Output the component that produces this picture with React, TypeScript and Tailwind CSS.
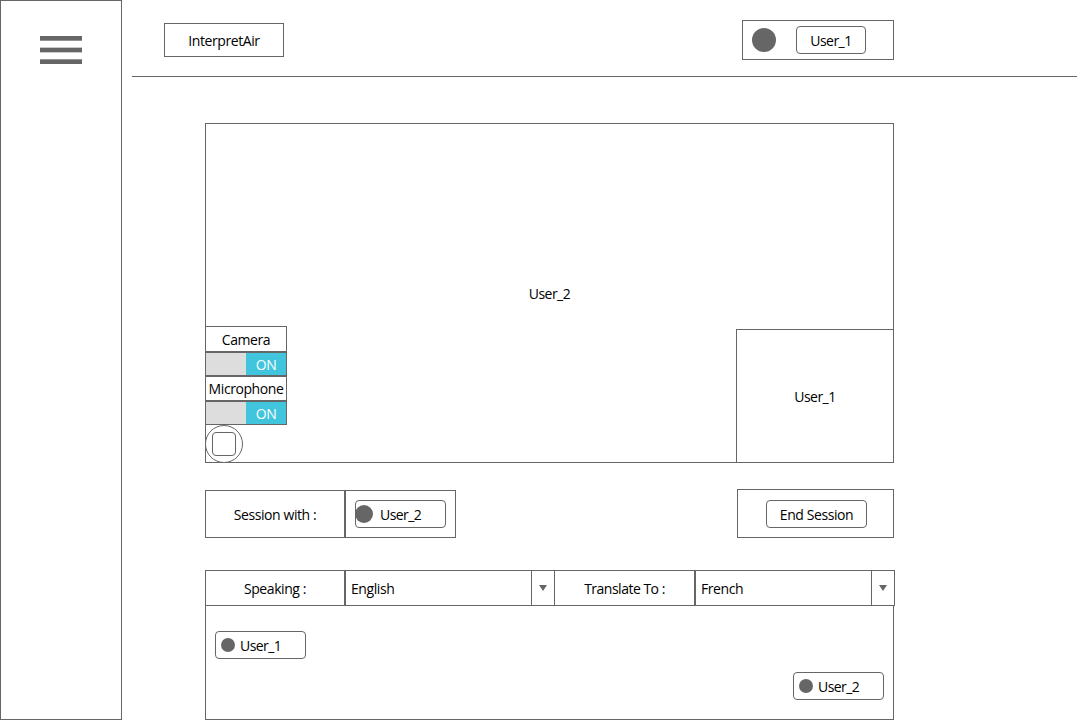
import type { ReactNode } from "react";

function Box({ className = "", children }: { className?: string; children?: ReactNode }) {
  return (
    <div className={`flex shrink-0 items-center border border-[#666666] bg-white ${className}`}>
      {children}
    </div>
  );
}

function Label({ className = "", children }: { className?: string; children: ReactNode }) {
  return <span className={`whitespace-nowrap ${className}`}>{children}</span>;
}

function MenuIcon() {
  return (
    <svg width="42" height="28" viewBox="0 0 42 28" fill="#666666">
      <rect width="42" height="4.7" />
      <rect y="11.65" width="42" height="4.7" />
      <rect y="23.3" width="42" height="4.7" />
    </svg>
  );
}

function Toggle() {
  return (
    <div className="flex h-6 w-[82px] border border-[#666666] bg-[#dddddd]">
      <div className="ml-auto flex w-10 items-center justify-center bg-[#40c5dc] pt-0.5 text-white">
        <Label>ON</Label>
      </div>
    </div>
  );
}

function Select({ value, className }: { value: string; className: string }) {
  return (
    <Box className={`h-9 ${className}`}>
      <div className="flex flex-1 pl-[5px] pt-0.5">
        <Label>{value}</Label>
      </div>
      <div className="flex w-[23px] items-center justify-center self-stretch border-l border-[#666666]">
        <svg width="8" height="6" viewBox="0 0 8 6" fill="#666666">
          <path d="M0 0h8L4 6z" />
        </svg>
      </div>
    </Box>
  );
}

function UserChip({ name, dot, className = "" }: { name: string; dot: ReactNode; className?: string }) {
  return (
    <Box className={`h-7 w-[91px] rounded-[4px] ${className}`}>
      <div className="flex w-6 shrink-0">{dot}</div>
      <Label className="pt-0.5 tracking-[-0.55px]">{name}</Label>
    </Box>
  );
}

const smallDot = <div className="ml-[5px] size-[13.5px] rounded-full bg-[#666666]" />;
const largeDot = <div className="-ml-px size-[17.5px] rounded-full bg-[#666666]" />;

export default function App() {
  return (
    <div className="flex h-[720px] w-[1080px] overflow-hidden bg-white font-['Open_Sans','Noto_Sans',sans-serif] text-[14px] leading-[18px] tracking-[-0.42px] text-black">
      <aside className="flex w-[122px] shrink-0 justify-center border border-[#666666] pt-[35px]">
        <MenuIcon />
      </aside>

      <div className="flex flex-1 flex-col">
        <header className="ml-2.5 mr-[3px] flex h-[77px] shrink-0 justify-between border-b border-[#666666] pl-8 pr-[183px]">
          <Box className="mt-[23px] h-[34px] w-[120px] justify-center pt-0.5">
            <Label>InterpretAir</Label>
          </Box>
          <Box className="mt-5 h-10 w-[152px] pl-[9px]">
            <div className="size-6 rounded-full bg-[#666666]" />
            <Box className="ml-5 h-7 w-[70px] justify-center rounded-[4px] pt-0.5">
              <Label className="tracking-[-0.55px]">User_1</Label>
            </Box>
          </Box>
        </header>

        <main className="ml-[83px] mt-[46px] flex w-[690px] flex-col">
          <section className="relative flex h-[340px] w-[689px] shrink-0 items-center justify-center border border-[#666666] pt-0.5">
            <Label className="tracking-[-0.55px]">User_2</Label>
            <div className="absolute -bottom-px -left-px flex flex-col">
              <Box className="h-[26px] w-[82px] justify-center pt-0.5">
                <Label>Camera</Label>
              </Box>
              <Toggle />
              <Box className="h-[25px] w-[82px] justify-center">
                <Label>Microphone</Label>
              </Box>
              <Toggle />
              <Box className="size-[38px] justify-center rounded-full">
                <Box className="size-6 rounded-[4px]" />
              </Box>
            </div>
            <Box className="absolute -bottom-px -right-px h-[134px] w-[158px] justify-center pt-0.5">
              <Label className="tracking-[-0.55px]">User_1</Label>
            </Box>
          </section>

          <section className="mt-[26px] flex h-[49px] w-[689px] shrink-0 items-end">
            <Box className="h-12 w-[140px] justify-center pt-0.5">
              <Label>Session with :</Label>
            </Box>
            <Box className="h-12 w-[111px] pl-[9px]">
              <UserChip name="User_2" dot={largeDot} />
            </Box>
            <Box className="ml-auto h-[49px] w-[157px] justify-center pl-0.5">
              <Box className="h-7 w-[101px] justify-center rounded-[4px] pt-0.5">
                <Label>End Session</Label>
              </Box>
            </Box>
          </section>

          <section className="mt-8 flex shrink-0">
            <Box className="h-9 w-[140px] justify-center pt-0.5">
              <Label>Speaking :</Label>
            </Box>
            <Select value="English" className="w-[210px]" />
            <Box className="h-9 w-[140px] justify-center border-l-0 pt-0.5">
              <Label className="tracking-[-0.5px]">Translate To :</Label>
            </Box>
            <Select value="French" className="w-[200px]" />
          </section>

          <section className="flex h-[114px] w-[689px] shrink-0 flex-col border border-t-0 border-[#666666] px-[9px] pt-[25px]">
            <UserChip name="User_1" dot={smallDot} />
            <UserChip name="User_2" dot={smallDot} className="mt-[13px] self-end" />
          </section>
        </main>
      </div>
    </div>
  );
}
